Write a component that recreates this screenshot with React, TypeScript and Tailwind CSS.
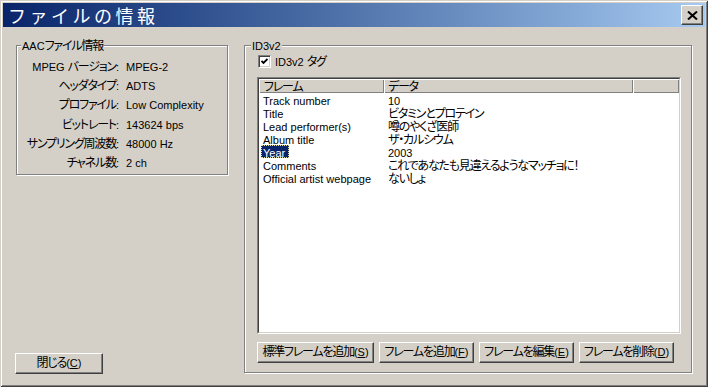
import React from 'react';

const jp = /[\u3000-\uffff]/;

// Latin runs at 11px, Japanese runs tightened to mimic MS UI Gothic 9pt
function Mixed({ text }: { text: string }) {
  const parts = text.split(/([\u3000-\uffff]+)/).filter(Boolean);
  return (
    <>
      {parts.map((p, i) => (
        <span key={i} className={jp.test(p) ? 'text-[12px] tracking-[-1.2px]' : 'text-[11px]'}>
          {p}
        </span>
      ))}
    </>
  );
}

const raised =
  'bg-[#d4d0c8] border border-t-white border-l-white border-r-[#404040] border-b-[#404040] shadow-[inset_-1px_-1px_0_#808080]';

const etched = 'border border-[#808080] shadow-[inset_1px_1px_0_#ffffff,1px_1px_0_#ffffff]';

const fileInfo = [
  ['MPEG バージョン:', 'MPEG-2'],
  ['ヘッダタイプ:', 'ADTS'],
  ['プロファイル:', 'Low Complexity'],
  ['ビットレート:', '143624 bps'],
  ['サンプリング周波数:', '48000 Hz'],
  ['チャネル数:', '2 ch'],
];

const frames = [
  ['Track number', '10'],
  ['Title', 'ビタミンとプロテイン'],
  ['Lead performer(s)', '噂のやくざ医師'],
  ['Album title', 'ザ・カルシウム'],
  ['Year', '2003'],
  ['Comments', 'これであなたも見違えるようなマッチョに！'],
  ['Official artist webpage', 'ないしょ'],
];

const Btn = ({ label, k, w }: { label: string; k: string; w: string }) => (
  <button className={`${raised} ${w} h-[21px] flex items-center justify-center whitespace-nowrap leading-[13px]`}>
    <Mixed text={label} />
    <span className="text-[11px]">(</span>
    <span className="text-[11px] underline underline-offset-1">{k}</span>
    <span className="text-[11px]">)</span>
  </button>
);

export default function App() {
  return (
    <div className="w-[708px] h-[387px] bg-[#d4d0c8] p-[3px] flex flex-col text-black leading-[13px] font-['Liberation_Sans','Noto_Sans_CJK_JP',sans-serif] [font-feature-settings:'palt'] shadow-[inset_1px_1px_0_#d4d0c8,inset_-1px_-1px_0_#404040,inset_2px_2px_0_#ffffff,inset_-2px_-2px_0_#808080]">
      {/* title bar */}
      <div className="h-[24px] flex items-center bg-linear-to-r from-[#0a246a] to-[#a6caf0] pl-[5px] pr-[2px]">
        <span className="text-white text-[18px] leading-[20px] tracking-[3.5px] font-['Noto_Sans_CJK_JP',sans-serif] [font-feature-settings:normal]">
          ファイルの情報
        </span>
        <button className={`ml-auto w-[22px] h-[20px] flex items-center justify-center ${raised}`}>
          <svg width="11" height="9" viewBox="0 0 11 9">
            <path d="M1 0.5 L10 8.5 M10 0.5 L1 8.5" stroke="#000" strokeWidth="2" />
          </svg>
        </button>
      </div>

      <div className="flex flex-1 px-[13px] pt-[18px]">
        {/* left column */}
        <div className="w-[213px] h-[329px] flex flex-col">
          <div className={`relative w-[212px] h-[130px] ${etched}`}>
            <span className="absolute left-[4px] top-[-8px] px-[1px] bg-[#d4d0c8] whitespace-nowrap">
              <Mixed text="AACファイル情報" />
            </span>
            <div className="grid grid-cols-[102px_1fr] gap-x-[7px] pt-[11px] leading-[18.2px]">
              {fileInfo.map(([k, v]) => (
                <React.Fragment key={k}>
                  <div className="text-right whitespace-nowrap">
                    <Mixed text={k} />
                  </div>
                  <div className="whitespace-nowrap">
                    <Mixed text={v} />
                  </div>
                </React.Fragment>
              ))}
            </div>
          </div>
          <button className={`mt-auto -ml-[1px] w-[88px] h-[21px] flex items-center justify-center whitespace-nowrap ${raised}`}>
            <Mixed text="閉じる" />
            <span className="text-[11px]">(</span>
            <span className="text-[11px] underline underline-offset-1">C</span>
            <span className="text-[11px]">)</span>
          </button>
        </div>

        {/* ID3v2 group */}
        <div className={`relative ml-[15px] w-[448px] h-[328px] pl-[12px] pt-[9px] ${etched}`}>
          <span className="absolute left-[6px] top-[-8px] px-[1px] bg-[#d4d0c8]">
            <Mixed text="ID3v2" />
          </span>
          <label className="flex items-center h-[13px] ml-[1px] gap-[4px] whitespace-nowrap">
            <span className="w-[13px] h-[13px] bg-white border border-t-[#808080] border-l-[#808080] border-r-white border-b-white shadow-[inset_1px_1px_0_#404040,inset_-1px_-1px_0_#d4d0c8] flex items-center justify-center">
              <svg width="7" height="7" viewBox="0 0 7 7">
                <polyline points="0.5,3 2.5,5 6.5,1" fill="none" stroke="#000" strokeWidth="1.8" />
              </svg>
            </span>
            <span>
              <Mixed text="ID3v2 タグ" />
            </span>
          </label>

          {/* frame list */}
          <div className="mt-[9px] w-[424px] h-[257px] border border-t-[#808080] border-l-[#808080] border-r-white border-b-white">
            <div className="h-full bg-white border border-t-[#404040] border-l-[#404040] border-r-[#d4d0c8] border-b-[#d4d0c8] flex flex-col">
              <div className="flex h-[14px] bg-[#d4d0c8]">
                <div className="w-[125px] pl-[5px] shadow-[inset_1px_1px_0_#ffffff,inset_-1px_-1px_0_#808080]">
                  <Mixed text="フレーム" />
                </div>
                <div className="w-[249px] pl-[4px] shadow-[inset_1px_1px_0_#ffffff,inset_-1px_-1px_0_#808080]">
                  <Mixed text="データ" />
                </div>
                <div className="flex-1 shadow-[inset_1px_1px_0_#ffffff,inset_-1px_-1px_0_#808080]" />
              </div>
              {frames.map(([k, v]) => (
                <div key={k} className="flex h-[13px] whitespace-nowrap">
                  {k === 'Year' ? (
                    <div className="w-[125px] pl-[2px] flex">
                      <span className="h-[13px] pl-[2px] pr-[4px] bg-[#0a246a] text-white outline-1 outline-dotted outline-[#e0e0a0] -outline-offset-1">
                        <Mixed text={k} />
                      </span>
                    </div>
                  ) : (
                    <div className="w-[125px] pl-[4px]">
                      <Mixed text={k} />
                    </div>
                  )}
                  <div className="pl-[4px]">
                    <Mixed text={v} />
                  </div>
                </div>
              ))}
            </div>
          </div>

          <div className="mt-[8px] flex gap-[5px]">
            <Btn label="標準フレームを追加" k="S" w="w-[117px]" />
            <Btn label="フレームを追加" k="F" w="w-[95px]" />
            <Btn label="フレームを編集" k="E" w="w-[95px]" />
            <Btn label="フレームを削除" k="D" w="w-[95px]" />
          </div>
        </div>
      </div>
    </div>
  );
}
